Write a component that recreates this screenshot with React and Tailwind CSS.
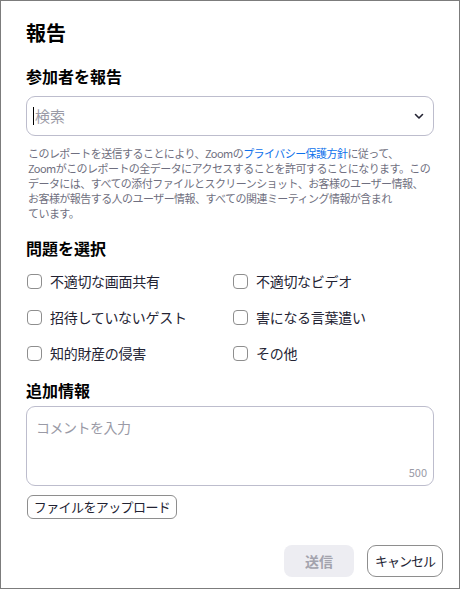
import React from 'react';

const FONT = { fontFamily: '"Noto Sans CJK JP", "Noto Sans", sans-serif' };

const issues = [
    '不適切な画面共有',
    '不適切なビデオ',
    '招待していないゲスト',
    '害になる言葉遣い',
    '知的財産の侵害',
    'その他',
];

function Checkbox({ label }) {
    return (
        <label className="flex items-center gap-[8px] h-[36px] cursor-pointer">
            <span className="w-[15px] h-[15px] rounded-[4px] border border-[#8e8e8e] bg-white shrink-0" />
            <span className="text-[14px] leading-[20px] text-[#232333] tracking-[-0.3px]">{label}</span>
        </label>
    );
}

export default function App() {
    return (
        <div style={FONT} className="w-[460px] h-[589px] bg-white border border-[#7c7c7c] flex flex-col overflow-hidden">
            <div className="px-[25px]">
                {/* タイトル */}
                <h1 className="pt-[20px] text-[20px] leading-[24px] font-bold text-[#000]">報告</h1>

                {/* 参加者 */}
                <h2 className="mt-[21px] text-[16px] leading-[20px] font-bold text-[#000]">参加者を報告</h2>
                <div className="mt-[10px] h-[40px] rounded-[9px] border border-[#bdbdcd] flex items-center pl-[6px] pr-[8px]">
                    <span className="w-px h-[18px] bg-black" />
                    <span className="ml-px text-[15px] leading-[20px] text-[#9a9aa6] flex-1">検索</span>
                    <svg width="12" height="8" viewBox="0 0 12 8" fill="none" stroke="#232333" strokeWidth="1.6" strokeLinecap="round" strokeLinejoin="round">
                        <path d="M2.5 2.5l3.5 3.5 3.5-3.5" />
                    </svg>
                </div>

                <p className="mt-[10px] pl-[2px] text-[11px] leading-[15px] text-[#6f6f80] tracking-[-0.55px] whitespace-nowrap">
                    このレポートを送信することにより、Zoomの<span className="text-[#0e71eb]">プライバシー保護方針</span>に従って、<br />
                    Zoomがこのレポートの全データにアクセスすることを許可することになります。この<br />
                    データには、すべての添付ファイルとスクリーンショット、お客様のユーザー情報、<br />
                    お客様が報告する人のユーザー情報、すべての関連ミーティング情報が含まれ<br />
                    ています。
                </p>

                {/* 問題 */}
                <h2 className="mt-[17px] text-[16px] leading-[20px] font-bold text-[#000]">問題を選択</h2>
                <div className="mt-[5px] pl-[1px] grid grid-cols-[206px_1fr]">
                    {issues.map((t) => (
                        <Checkbox key={t} label={t} />
                    ))}
                </div>

                {/* 追加情報 */}
                <h2 className="mt-[9px] text-[16px] leading-[20px] font-bold text-[#000]">追加情報</h2>
                <div className="relative mt-[6px] h-[80px] rounded-[9px] border border-[#bdbdcd] px-[9px] pt-[7px]">
                    <span className="text-[14px] leading-[20px] text-[#9a9aa6] tracking-[-0.5px]">コメントを入力</span>
                    <span className="absolute right-[6px] bottom-[6px] text-[11px] leading-[14px] text-[#9a9aa6]">500</span>
                </div>

                <button className="mt-[9px] ml-[1px] h-[24px] w-[150px] rounded-[6px] border border-[#8e8e8e] text-[13px] leading-[18px] text-[#232333] tracking-[-0.6px] flex items-center justify-center">
                    ファイルをアップロード
                </button>
            </div>

            {/* フッター */}
            <div className="mt-[26px] flex justify-end gap-[13px] pr-[16px]">
                <button className="h-[32px] w-[70px] rounded-[8px] bg-[#ededf2] text-[14px] font-bold text-[#a3a3ad]">
                    送信
                </button>
                <button className="h-[32px] w-[76px] rounded-[9px] border border-[#8e8e8e] text-[13px] text-[#232333] tracking-[-1px]">
                    キャンセル
                </button>
            </div>
        </div>
    );
}
